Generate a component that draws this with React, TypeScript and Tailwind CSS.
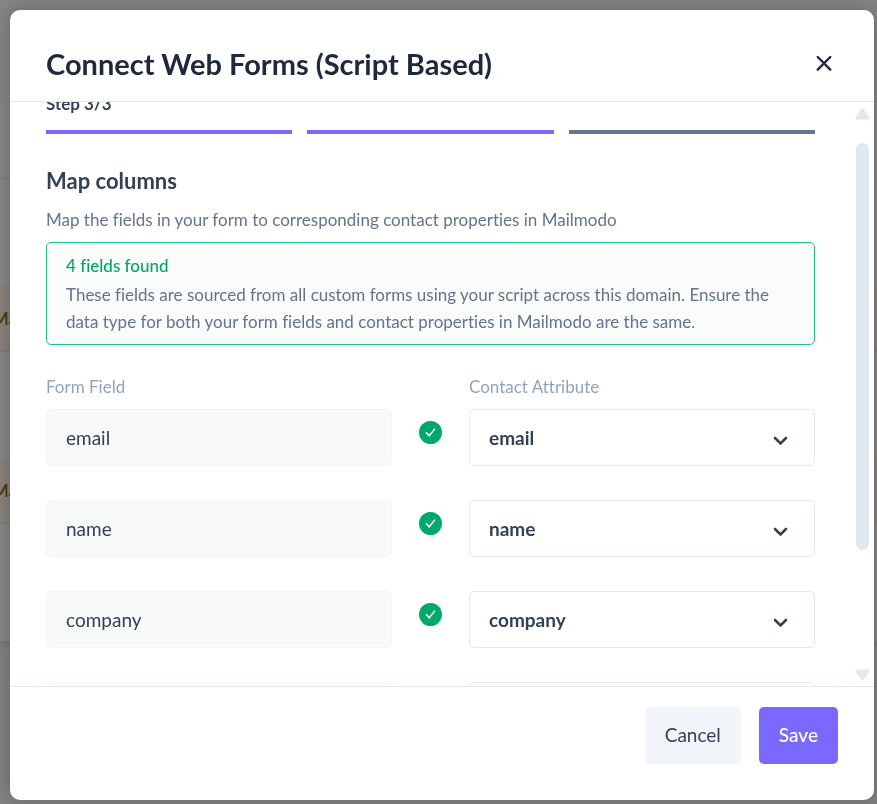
import React, { useLayoutEffect, useRef, useState } from 'react';

interface FieldMapping {
    field: string;
    attribute: string;
}

const STEPS = ['bg-[#7b68ff]', 'bg-[#7b68ff]', 'bg-[#64748b]'];

const ATTRIBUTES = ['email', 'name', 'company', 'phone'];

const INITIAL_MAPPINGS: FieldMapping[] = [
    { field: 'email', attribute: 'email' },
    { field: 'name', attribute: 'name' },
    { field: 'company', attribute: 'company' },
    { field: 'phone', attribute: 'phone' }
];

const CheckBadge: React.FC = () => (
    <svg width="23" height="23" viewBox="0 0 23 23" fill="none" aria-hidden="true">
        <circle cx="11.5" cy="11.5" r="11.5" fill="#00a86b" />
        <path d="M7 11.2L10.2 14.8L16 7.6" stroke="#fff" strokeWidth="1.5" />
    </svg>
);

const Chevron: React.FC = () => (
    <svg className="pointer-events-none absolute right-6 top-6" width="18" height="16" viewBox="0 0 18 16" fill="none" aria-hidden="true">
        <path d="M2 5L7.5 10.5L13 5" stroke="#334155" strokeWidth="2.6" strokeLinecap="round" />
    </svg>
);

// Dimmed list page that sits under the modal
const PageBehind: React.FC = () => (
    <div className="fixed inset-0 flex flex-col overflow-hidden bg-[#838385] text-[18px] text-[#4d3800]" aria-hidden="true">
        <div className="h-26 shrink-0 bg-[#868688]" />
        <div className="h-[75px] shrink-0 border-b border-[#7c7d80] bg-[#888888]" />
        <div className="h-[107px] shrink-0 bg-[#888888]" />
        <div className="flex h-[66px] shrink-0 items-center border-b-2 border-[#7c7d80] bg-[#88847c]">
            <span className="-ml-2 font-medium">Ma</span>
        </div>
        <div className="h-[106px] shrink-0 bg-[#888888]" />
        <div className="flex h-[66px] shrink-0 items-center border-b-2 border-[#7c7d80] bg-[#88847c]">
            <span className="-ml-2 font-medium">Ma</span>
        </div>
        <div className="h-[117px] shrink-0 bg-[#888888] shadow-md" />
    </div>
);

const ScrollTrack: React.FC = () => (
    <div className="flex w-[15px] shrink-0 flex-col items-center pb-[5px] pt-1.5" aria-hidden="true">
        <svg width="15" height="12" viewBox="0 0 15 12">
            <path d="M7.5 2L13 10H2Z" fill="#e2e8f0" stroke="#e2e8f0" strokeWidth="3" strokeLinejoin="round" />
        </svg>
        <div className="flex w-full grow flex-col items-center py-[23px]">
            <div className="h-[81%] w-[13px] rounded-full bg-[#e2e8f0]" />
        </div>
        <svg width="15" height="12" viewBox="0 0 15 12">
            <path d="M7.5 10L13 2H2Z" fill="#e2e8f0" stroke="#e2e8f0" strokeWidth="3" strokeLinejoin="round" />
        </svg>
    </div>
);

const App: React.FC = () => {
    const [mappings, setMappings] = useState<FieldMapping[]>(INITIAL_MAPPINGS);
    const bodyRef = useRef<HTMLDivElement>(null);

    useLayoutEffect(() => {
        if (bodyRef.current) bodyRef.current.scrollTop = 46;
    }, []);

    const handleChange = (field: string, attribute: string) => {
        setMappings(mappings.map(m => (m.field === field ? { ...m, attribute } : m)));
    };

    return (
        <div className="flex h-screen flex-col pb-1 pl-2.5 pr-[3px] pt-2.5 font-['Lato',sans-serif] [font-variant-ligatures:none]">
            <PageBehind />
            <div role="dialog" aria-labelledby="modal-title" className="relative flex min-h-0 flex-1 flex-col overflow-hidden rounded-[10px] bg-white shadow-[0_0_20px_rgba(0,0,0,0.25)]">

                {/* Header */}
                <div className="flex h-23 shrink-0 items-center justify-between border-b border-[#e2e8f0] pl-9 pr-9 pt-4">
                    <h1 id="modal-title" className="text-[29px] leading-9 font-bold text-[#1e293b]">Connect Web Forms (Script Based)</h1>
                    <button type="button" aria-label="Close" className="flex h-7 w-7 items-center justify-center">
                        <svg width="18" height="18" viewBox="0 0 18 18" fill="none">
                            <path d="M2.7 2L15.3 14.6M15.3 2L2.7 14.6" stroke="#1e293b" strokeWidth="2.4" strokeLinecap="round" />
                        </svg>
                    </button>
                </div>

                {/* Body */}
                <div className="flex min-h-0 flex-1">
                    <div ref={bodyRef} className="flex-1 overflow-y-auto pb-9 pl-9 pr-10 pt-9 [scrollbar-width:none]">
                        <p className="text-[17px] leading-6 font-bold text-[#334155]">Step 3/3</p>
                        <div className="mt-3.5 flex gap-[15px]">
                            {STEPS.map((color, i) => (
                                <div key={i} className={`h-1 flex-1 ${color}`} />
                            ))}
                        </div>

                        <h2 className="mt-[31px] text-[22px] leading-8 font-bold text-[#334155]">Map columns</h2>
                        <p className="mt-[9px] text-[17px] leading-[27px] text-[#64748b]">Map the fields in your form to corresponding contact properties in Mailmodo</p>

                        <div className="mt-[9px] rounded-[5px] border border-[#1fc18c] bg-[#fafcf9] px-[19px] py-[9px] text-[17px] leading-[27px] text-[#64748b]">
                            <p className="font-medium text-[#00a86b]">4 fields found</p>
                            <p className="mt-0.5">These fields are sourced from all custom forms using your script across this domain. Ensure the data type for both your form fields and contact properties in Mailmodo are the same.</p>
                        </div>

                        <div className="mt-7 grid grid-cols-[1fr_77px_1fr] text-[17px] leading-[27px] text-[#94a3b8]">
                            <span id="form-field">Form Field</span>
                            <span />
                            <span id="contact-attribute">Contact Attribute</span>
                        </div>
                        <div className="mt-[9px] flex flex-col gap-[34px]">
                            {mappings.map(m => (
                                <div key={m.field} className="grid grid-cols-[1fr_77px_1fr]">
                                    <input
                                        readOnly
                                        value={m.field}
                                        aria-labelledby="form-field"
                                        className="h-[57px] w-full rounded-[5px] border border-[#f1f5f9] bg-[#f8faf9] px-[19px] text-[19px] text-[#334155] outline-none"
                                    />
                                    <div className="flex justify-center pt-3">
                                        <CheckBadge />
                                    </div>
                                    <div className="relative">
                                        <select
                                            value={m.attribute}
                                            onChange={e => handleChange(m.field, e.target.value)}
                                            aria-labelledby="contact-attribute"
                                            className="h-[57px] w-full appearance-none rounded-[5px] border border-[#e2e8f0] bg-white px-[19px] pt-0.5 text-[19px] font-bold text-[#334155] outline-none"
                                        >
                                            {ATTRIBUTES.map(a => <option key={a}>{a}</option>)}
                                        </select>
                                        <Chevron />
                                    </div>
                                </div>
                            ))}
                        </div>
                    </div>
                    <div className="flex pr-1">
                        <ScrollTrack />
                    </div>
                </div>

                {/* Footer */}
                <div className="flex shrink-0 justify-end gap-[18px] border-t border-[#e2e8f0] pb-9 pr-9 pt-5 text-[19px]">
                    <button type="button" className="h-[57px] rounded-[5px] bg-[#f1f5f9] px-5 text-[#334155]">Cancel</button>
                    <button type="button" className="h-[57px] rounded-[5px] bg-[#7b68ff] px-5 font-medium text-white">Save</button>
                </div>
            </div>
        </div>
    );
};

export default App;
